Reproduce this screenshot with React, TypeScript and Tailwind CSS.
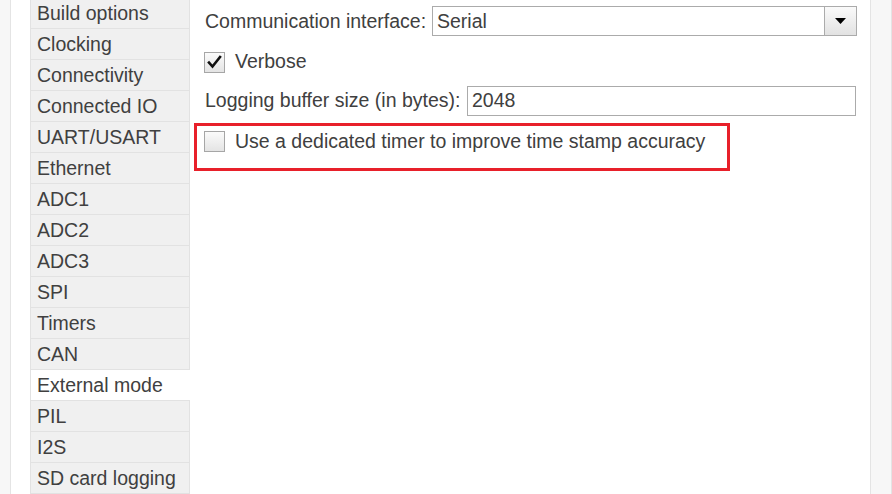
import React from 'react';

const NAV = [
  'Build options',
  'Clocking',
  'Connectivity',
  'Connected IO',
  'UART/USART',
  'Ethernet',
  'ADC1',
  'ADC2',
  'ADC3',
  'SPI',
  'Timers',
  'CAN',
  'External mode',
  'PIL',
  'I2S',
  'SD card logging',
];

const SELECTED = 'External mode';

function CheckBox({ checked }: { checked?: boolean }) {
  return (
    <div className="w-[21px] h-[21px] shrink-0 border border-[#a6a6a6] bg-gradient-to-b from-[#fbfbfb] to-[#e4e4e4] flex items-center justify-center">
      {checked && (
        <svg width="15" height="14" viewBox="0 0 15 14">
          <path d="M2 7.5 L5.5 11.5 L13 2" fill="none" stroke="#111" strokeWidth="2.6" strokeLinecap="square" />
        </svg>
      )}
    </div>
  );
}

export default function App() {
  return (
    <div
      className="flex w-[892px] h-[494px] overflow-hidden bg-white text-[#404040] text-[19.5px] leading-none"
      style={{ fontFamily: '"Liberation Sans", Arial, sans-serif' }}
    >
      {/* left gutter */}
      <div className="w-[11px] shrink-0 bg-[#f7f7f7] border-r border-[#e4e4e4]" />
      <div className="w-[19px] shrink-0" />

      {/* nav tree */}
      <div className="w-[160px] shrink-0 border-l border-[#e2e2e2] -mt-[2px]">
        {NAV.map((n) => (
          <div
            key={n}
            className={
              n === SELECTED
                ? 'h-[31px] flex items-center pl-[6px] pt-[2px] bg-white border-b border-[#e2e2e2]'
                : 'h-[31px] flex items-center pl-[6px] pt-[2px] bg-[#f0f0f0] border-b border-r border-[#e2e2e2]'
            }
          >
            {n}
          </div>
        ))}
      </div>

      {/* content */}
      <div className="flex-1 flex flex-col pl-[14px] pr-[13px]">
        <div className="flex items-center mt-[6px] h-[30px]">
          <span className="ml-[1px] pt-[2px] w-[227px] shrink-0">Communication interface:</span>
          <div className="flex-1 h-[30px] flex border border-[#ababab] bg-white">
            <span className="flex-1 flex items-center pl-[4px] pt-[1px]">Serial</span>
            <div className="w-[32px] border-l border-[#ababab] bg-gradient-to-b from-[#fafafa] to-[#e2e2e2] flex items-center justify-center">
              <svg width="11" height="6" viewBox="0 0 11 6">
                <path d="M0 0 H11 L5.5 6 Z" fill="#000" />
              </svg>
            </div>
          </div>
        </div>

        <div className="flex items-center mt-[15px] h-[22px]">
          <CheckBox checked />
          <span className="ml-[10px]">Verbose</span>
        </div>

        <div className="flex items-center mt-[13px] h-[30px]">
          <span className="ml-[1px] w-[262px] shrink-0">Logging buffer size (in bytes):</span>
          <div className="flex-1 h-[30px] flex items-center pl-[4px] mr-[1px] border border-[#ababab] bg-white">2048</div>
        </div>

        <div className="-ml-[10px] mt-[7px] w-[536px] h-[48px] border-[3px] border-[#e8202a] flex items-start pt-[5px] pl-[7px]">
          <CheckBox />
          <span className="ml-[10px] mt-[1px]">Use a dedicated timer to improve time stamp accuracy</span>
        </div>
      </div>

      {/* right gutter */}
      <div className="w-[22px] shrink-0 bg-[#f7f7f7] border-l border-r border-[#e4e4e4]" />
    </div>
  );
}
